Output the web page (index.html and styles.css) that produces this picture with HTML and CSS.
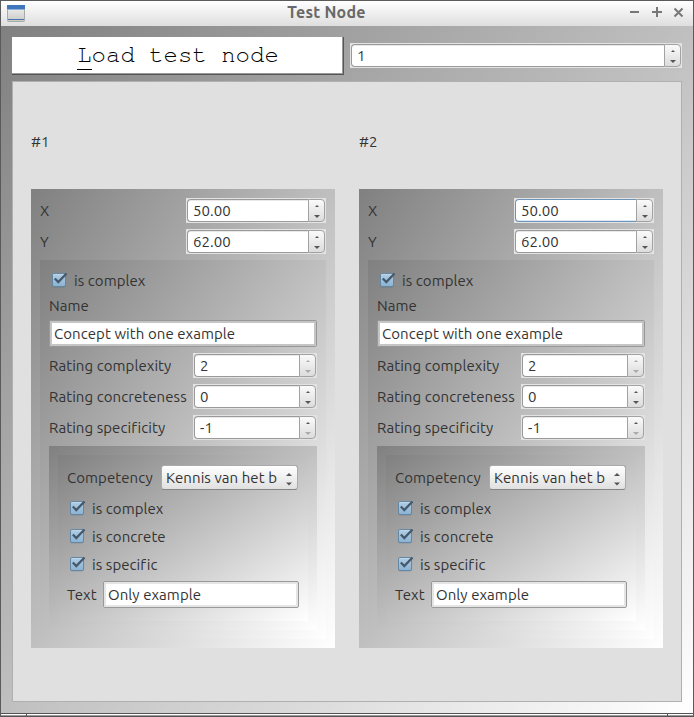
FILE: index.html
```html
<!DOCTYPE html>
<html lang="en">
<head>
<meta charset="utf-8">
<title>Test Node</title>
<link rel="stylesheet" href="styles.css">
</head>
<body>
<svg class="defs" width="0" height="0">
  <defs>
    <linearGradient id="boxfill" x1="0" y1="0" x2="0" y2="1"><stop offset="0" stop-color="#b2cee3"/><stop offset="1" stop-color="#8ab2d2"/></linearGradient>
    <linearGradient id="winfill" x1="0" y1="0" x2="0" y2="1"><stop offset="0" stop-color="#f2f2f0"/><stop offset="1" stop-color="#c9cac7"/></linearGradient>
    <symbol id="check" viewBox="0 0 18 18">
      <rect x="2" y="2.500" width="14" height="14" rx="2" fill="#000" opacity=".12"/>
      <rect x="2.500" y="2.500" width="13" height="13" rx="1.500" fill="url(#boxfill)" stroke="#6388a6"/>
      <path d="M3.500 3.500H14.500" stroke="#c5d9e8" opacity=".8"/>
      <path d="M4.800 7.500L8.300 11L16.500 2.500" fill="none" stroke="#45586c" stroke-width="2.300"/>
    </symbol>
    <symbol id="arrows" viewBox="0 0 8 14">
      <path class="up" d="M2 3L4 1L6 3Z"/>
      <path class="down" d="M1 11H7L4 14Z"/>
    </symbol>
    <symbol id="comboarrows" viewBox="0 0 8 14">
      <path d="M1 3L4 0L7 3Z"/>
      <path d="M1 9.500H7L4 12.500Z"/>
    </symbol>
  </defs>
</svg>
<div class="window">
  <header class="titlebar">
    <svg class="winicon" width="18" height="17" viewBox="0 0 18 17"><rect x=".5" y=".5" width="17" height="16" rx="1" fill="url(#winfill)" stroke="#a8aaa8"/><path d="M0 0H18V4H0Z" fill="#3f76bb"/><path d="M1 4.500H17" stroke="#8fb3dc"/><path d="M1 14.500H17" stroke="#4974a8"/></svg>
    <span class="title">Test Node</span>
    <svg class="controls" width="56" height="12" viewBox="0 0 56 12" fill="none" stroke="#777" stroke-width="2"><path d="M1 5H10M23 5H33M28 0V10M45.500 1.500L53.500 9.500M53.500 1.500L45.500 9.500"/></svg>
  </header>
  <main class="client">
    <div class="toolbar">
      <button class="load"><span class="key">L</span>oad test node</button>
      <div class="spin wide"><span class="value">1</span><span class="step"><svg><use href="#arrows"/></svg></span></div>
    </div>
    <div class="board">
      <section class="node">
        <div class="heading">#1</div>
        <div class="panel outer">
          <div class="row"><span>X</span><div class="spin"><span class="value">50.00</span><span class="step"><svg><use href="#arrows"/></svg></span></div></div>
          <div class="row"><span>Y</span><div class="spin"><span class="value">62.00</span><span class="step"><svg><use href="#arrows"/></svg></span></div></div>
          <div class="panel concept">
            <div class="check"><svg><use href="#check"/></svg><span>is complex</span></div>
            <div class="name">Name</div>
            <div class="edit"><span>Concept with one example</span></div>
            <div class="row"><span>Rating complexity</span><div class="spin small"><span class="value">2</span><span class="step dim"><svg><use href="#arrows"/></svg></span></div></div>
            <div class="row"><span>Rating concreteness</span><div class="spin small"><span class="value">0</span><span class="step"><svg><use href="#arrows"/></svg></span></div></div>
            <div class="row"><span>Rating specificity</span><div class="spin small"><span class="value">-1</span><span class="step downoff"><svg><use href="#arrows"/></svg></span></div></div>
            <div class="panel examples"><div class="panel example">
              <div class="row comporow"><span>Competency</span><div class="combo"><span>Kennis van het b</span><svg><use href="#comboarrows"/></svg></div></div>
              <div class="check"><svg><use href="#check"/></svg><span>is complex</span></div>
              <div class="check"><svg><use href="#check"/></svg><span>is concrete</span></div>
              <div class="check"><svg><use href="#check"/></svg><span>is specific</span></div>
              <div class="row textrow"><span>Text</span><div class="edit light"><span>Only example</span></div></div>
            </div></div>
          </div>
        </div>
      </section>
      <section class="node">
        <div class="heading">#2</div>
        <div class="panel outer">
          <div class="row"><span>X</span><div class="spin focus"><span class="value">50.00</span><span class="step"><svg><use href="#arrows"/></svg></span></div></div>
          <div class="row"><span>Y</span><div class="spin"><span class="value">62.00</span><span class="step"><svg><use href="#arrows"/></svg></span></div></div>
          <div class="panel concept">
            <div class="check"><svg><use href="#check"/></svg><span>is complex</span></div>
            <div class="name">Name</div>
            <div class="edit"><span>Concept with one example</span></div>
            <div class="row"><span>Rating complexity</span><div class="spin small"><span class="value">2</span><span class="step dim"><svg><use href="#arrows"/></svg></span></div></div>
            <div class="row"><span>Rating concreteness</span><div class="spin small"><span class="value">0</span><span class="step"><svg><use href="#arrows"/></svg></span></div></div>
            <div class="row"><span>Rating specificity</span><div class="spin small"><span class="value">-1</span><span class="step downoff"><svg><use href="#arrows"/></svg></span></div></div>
            <div class="panel examples"><div class="panel example">
              <div class="row comporow"><span>Competency</span><div class="combo"><span>Kennis van het b</span><svg><use href="#comboarrows"/></svg></div></div>
              <div class="check"><svg><use href="#check"/></svg><span>is complex</span></div>
              <div class="check"><svg><use href="#check"/></svg><span>is concrete</span></div>
              <div class="check"><svg><use href="#check"/></svg><span>is specific</span></div>
              <div class="row textrow"><span>Text</span><div class="edit light"><span>Only example</span></div></div>
            </div></div>
          </div>
        </div>
      </section>
    </div>
  </main>
  <footer class="grip"><i></i><i></i><i></i></footer>
</div>
</body>
</html>
```
FILE: styles.css
```css
* { box-sizing: border-box; }
body { margin: 0; font: 15px/17px Ubuntu, "Noto Sans", sans-serif; color: #333; letter-spacing: 0.07px; overflow: hidden; }
span { white-space: nowrap; }
.defs { position: absolute; }
.window { width: 694px; height: 717px; display: flex; flex-direction: column; border: 1px solid #5b5a5b; border-bottom: 0; }
.titlebar { height: 25px; flex: none; display: grid; grid-template-columns: 100px 1fr 141px; align-items: center; background: linear-gradient(#fff, #f2f2f2 40%, #dedede); }
.winicon { margin-left: 6px; }
.title { text-align: center; font-weight: 700; font-size: 16px; line-height: 15px; margin-top: -2px; color: #686868; letter-spacing: 0.25px; }
.controls { justify-self: end; margin-right: 8px; margin-top: -1px; }
.client { height: 687px; flex: none; padding: 11px; background: linear-gradient(to bottom right, #808080, #fff); }
.toolbar { display: flex; gap: 6px; align-items: center; height: 38px; margin-bottom: 6px; }
.load { width: 332px; height: 38px; padding: 0 0 2px; background: #fff; border: 0; box-shadow: inset -1px -1px #555, inset -2px -2px #999; font: 24px/37px "Courier 10 Pitch", "Nimbus Mono PS", FreeMono, "Liberation Mono", monospace; color: #000; letter-spacing: 0; }
.key { display: inline-block; height: 33px; line-height: 37px; border-bottom: 1px solid #000; vertical-align: top; }
.board { width: 670px; height: 621px; display: flex; gap: 24px; padding: 0 18px; background: #e0e0e0; border: 1px solid #b0b0b0; }
.node { width: 304px; }
.heading { height: 107px; padding-top: 51px; }
.panel { display: flex; flex-direction: column; gap: 6px; padding: 9px; background: linear-gradient(to bottom right, #808080, #fff); }
.outer { height: 459px; }
.concept { height: 379px; flex: none; }
.examples { height: 184px; flex: none; }
.example { height: 166px; flex: none; }
.row { display: flex; justify-content: space-between; align-items: center; height: 25px; flex: none; }
.spin { width: 140px; height: 25px; padding: 1px; background: #e3e3e3; display: flex; }
.spin.small { width: 124px; }
.spin.wide { width: 332px; margin-top: -1px; }
.value { flex: 1; height: 23px; background: #fff; border: 1px solid #999; border-right: 0; border-radius: 4px 0 0 4px; padding-left: 5px; line-height: 22px; box-shadow: inset 0 1px #e8e8e8; }
.focus .value { border-color: #6c93b8; box-shadow: inset 0 -1px #dce9f5; }
.step { width: 17px; height: 23px; border: 1px solid #a2a2a2; border-radius: 0 4px 4px 0; background: linear-gradient(#fafafa, #dcdcdc); display: flex; justify-content: center; padding-top: 4px; fill: #555; --down: #555; }
.step svg { width: 8px; height: 14px; }
.down { fill: var(--down); }
.dim { fill: #aaa; --down: #aaa; }
.downoff { --down: #aaa; }
.check { height: 22px; flex: none; display: flex; align-items: center; gap: 6px; padding-left: 1px; }
.check svg { width: 18px; height: 18px; }
.name { height: 17px; }
.edit { height: 27px; flex: none; border: 1px solid #989898; border-radius: 2px; background: #fff; box-shadow: inset 0 0 0 2px #c5c5c5; padding-left: 4px; line-height: 26px; }
.light { width: 196px; border-color: #999; box-shadow: inset 0 0 0 2px #e5e5e5; }
.comporow { height: 27px; }
.combo { width: 137px; height: 25px; margin-right: 1px; border: 1px solid #aaa; border-bottom-color: #858585; border-radius: 3px; background: linear-gradient(#fff, #e0e0e0); display: flex; justify-content: space-between; align-items: center; padding: 0 4px; }
.combo svg { width: 8px; height: 14px; fill: #555; margin-top: 4px; }
.textrow { height: 27px; }
.grip { height: 4px; flex: none; display: grid; grid-template-columns: 25px 1fr 26px; background: linear-gradient(#555 0 1px, #fff 1px 2px, #999 2px 3px, #555 3px); }
.grip i + i { border-left: 1px solid #555; }
```
